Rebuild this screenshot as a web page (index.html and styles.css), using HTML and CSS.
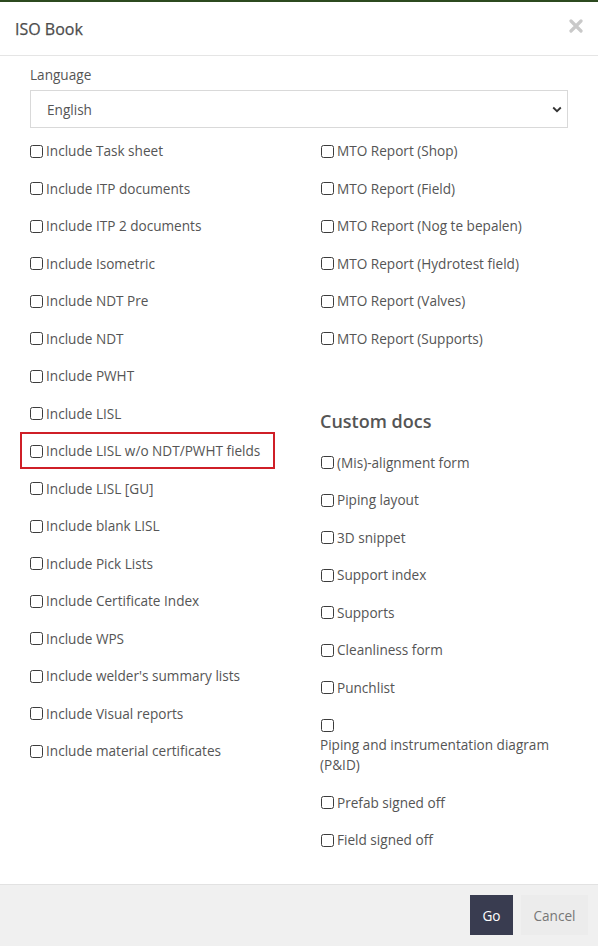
FILE: index.html
```html
<!DOCTYPE html>
<html lang="en">
<head>
<meta charset="utf-8">
<title>ISO Book</title>
<link rel="stylesheet" href="styles.css">
</head>
<body>
<div class="topbar"></div>
<div class="modal">
  <div class="modal-header">
    <h4 class="modal-title">ISO Book</h4>
    <button class="close" aria-label="Close">
      <svg width="14" height="14" viewBox="0 0 14 14"><path d="M2 2 L12 12 M12 2 L2 12" stroke="#c9c9c9" stroke-width="3.2" stroke-linecap="round"/></svg>
    </button>
  </div>
  <div class="modal-body">
    <label class="field-label">Language</label>
    <div class="select-wrap">
      <select class="form-select"><option>English</option></select>
      <svg class="chev" width="10" height="7" viewBox="0 0 10 7"><path d="M1.2 1.5 L5 5.2 L8.8 1.5" fill="none" stroke="#333" stroke-width="1.8"/></svg>
    </div>
    <div class="cols">
      <div class="col">
        <label class="cb"><input type="checkbox"><span>Include Task sheet</span></label>
        <label class="cb"><input type="checkbox"><span>Include ITP documents</span></label>
        <label class="cb"><input type="checkbox"><span>Include ITP 2 documents</span></label>
        <label class="cb"><input type="checkbox"><span>Include Isometric</span></label>
        <label class="cb"><input type="checkbox"><span>Include NDT Pre</span></label>
        <label class="cb"><input type="checkbox"><span>Include NDT</span></label>
        <label class="cb"><input type="checkbox"><span>Include PWHT</span></label>
        <label class="cb"><input type="checkbox"><span>Include LISL</span></label>
        <label class="cb highlighted"><input type="checkbox"><span>Include LISL w/o NDT/PWHT fields</span></label>
        <label class="cb"><input type="checkbox"><span>Include LISL [GU]</span></label>
        <label class="cb"><input type="checkbox"><span>Include blank LISL</span></label>
        <label class="cb"><input type="checkbox"><span>Include Pick Lists</span></label>
        <label class="cb"><input type="checkbox"><span>Include Certificate Index</span></label>
        <label class="cb"><input type="checkbox"><span>Include WPS</span></label>
        <label class="cb"><input type="checkbox"><span>Include welder's summary lists</span></label>
        <label class="cb"><input type="checkbox"><span>Include Visual reports</span></label>
        <label class="cb"><input type="checkbox"><span>Include material certificates</span></label>
      </div>
      <div class="col col-right">
        <label class="cb"><input type="checkbox"><span>MTO Report (Shop)</span></label>
        <label class="cb"><input type="checkbox"><span>MTO Report (Field)</span></label>
        <label class="cb"><input type="checkbox"><span>MTO Report (Nog te bepalen)</span></label>
        <label class="cb"><input type="checkbox"><span>MTO Report (Hydrotest field)</span></label>
        <label class="cb"><input type="checkbox"><span>MTO Report (Valves)</span></label>
        <label class="cb"><input type="checkbox"><span>MTO Report (Supports)</span></label>
        <h3 class="section-title">Custom docs</h3>
        <label class="cb"><input type="checkbox"><span>(Mis)-alignment form</span></label>
        <label class="cb"><input type="checkbox"><span>Piping layout</span></label>
        <label class="cb"><input type="checkbox"><span>3D snippet</span></label>
        <label class="cb"><input type="checkbox"><span>Support index</span></label>
        <label class="cb"><input type="checkbox"><span>Supports</span></label>
        <label class="cb"><input type="checkbox"><span>Cleanliness form</span></label>
        <label class="cb"><input type="checkbox"><span>Punchlist</span></label>
        <label class="cb stacked"><input type="checkbox"><span>Piping and instrumentation diagram (P&amp;ID)</span></label>
        <label class="cb"><input type="checkbox"><span>Prefab signed off</span></label>
        <label class="cb"><input type="checkbox"><span>Field signed off</span></label>
      </div>
    </div>
  </div>
  <div class="modal-footer">
    <button class="btn btn-go">Go</button>
    <button class="btn btn-cancel">Cancel</button>
  </div>
</div>
</body>
</html>
```
FILE: styles.css
```css
*, *::before, *::after { box-sizing: border-box; }
html, body {
  margin: 0;
  padding: 0;
  background: #fff;
}
body {
  font-family: "Open Sans", "Liberation Sans", sans-serif;
  font-size: 13.6px;
  color: #555;
  width: 598px;
  height: 946px;
  overflow: hidden;
  display: flex;
  flex-direction: column;
}
.topbar {
  height: 2px;
  background: #2c4a1f;
  flex: none;
}
.modal {
  flex: 1;
  display: flex;
  flex-direction: column;
}
.modal-header {
  height: 54px;
  padding: 0 15px;
  display: flex;
  align-items: center;
  justify-content: space-between;
  border-bottom: 1px solid #e5e5e5;
  flex: none;
}
.modal-title {
  margin: 0;
  font-size: 16px;
  font-weight: 400;
  color: #4d4d4d;
  line-height: 20px;
  -webkit-text-stroke: 0.25px #4d4d4d;
}
.close {
  border: 0;
  background: none;
  padding: 0;
  margin-right: 0;
  margin-top: -6px;
  display: flex;
}
.modal-body {
  flex: 1;
  padding: 10px 30px 0 30px;
}
.field-label {
  display: block;
  line-height: 18px;
  color: #555;
}
.select-wrap {
  position: relative;
  margin-top: 6px;
  width: 538px;
}
.form-select {
  appearance: none;
  -webkit-appearance: none;
  width: 100%;
  height: 38px;
  border: 1px solid #d9d9d9;
  border-radius: 0;
  background: #fff;
  font-family: inherit;
  font-size: 13.6px;
  color: #555;
  padding: 0 16px;
  display: block;
}
.chev {
  position: absolute;
  right: 6px;
  top: 16px;
}
.cols {
  display: grid;
  grid-template-columns: 290px 1fr;
  margin-top: 13px;
}
.col {
  display: flex;
  flex-direction: column;
  gap: 17.5px;
  align-items: flex-start;
}
.cb {
  display: flex;
  align-items: center;
  line-height: 20px;
  height: 20px;
  color: #555;
  position: relative;
  white-space: nowrap;
}
.cb input {
  appearance: none;
  -webkit-appearance: none;
  width: 13px;
  height: 13px;
  margin: 0 3px 0 0;
  border: 1px solid #3c3c3c;
  border-radius: 2.5px;
  background: #fff;
  flex: none;
}
.col-right .cb input { margin-left: 1px; }
.highlighted::after {
  content: "";
  position: absolute;
  left: -10px;
  top: -9px;
  width: 255px;
  height: 37px;
  border: 2px solid #cf1f27;
}
.section-title {
  margin: -17.5px 0 -17.5px 0;
  padding: 59px 0 19px 0;
  font-size: 18px;
  font-weight: 600;
  line-height: 26px;
  color: #555;
}
.cb.stacked {
  display: block;
  height: auto;
  white-space: normal;
}
.cb.stacked input {
  display: block;
  margin-top: 4px;
  margin-bottom: 3px;
}
.cb.stacked span {
  display: block;
  width: 240px;
}
.modal-footer {
  height: 62px;
  flex: none;
  background: #f0f0f0;
  border-top: 1px solid #e2e2e2;
  display: flex;
  justify-content: flex-end;
  align-items: flex-start;
  padding: 10px 10px 0 0;
  gap: 8px;
}
.btn {
  height: 40px;
  border: 0;
  font-family: inherit;
  font-size: 13.6px;
  border-radius: 0;
  padding: 0;
}
.btn-go {
  background: #393c50;
  color: #fff;
  width: 43px;
}
.btn-cancel {
  background: #ececec;
  color: #777;
  width: 67px;
}
```
